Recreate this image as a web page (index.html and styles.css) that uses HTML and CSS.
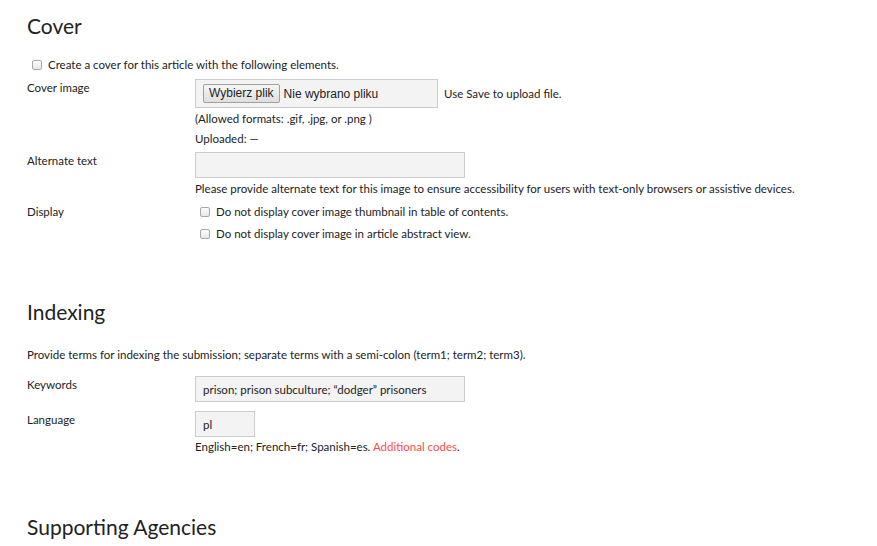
FILE: index.html
```html
<!DOCTYPE html>
<html lang="en">
<head>
  <meta charset="UTF-8">
  <title>Cover and indexing</title>
  <link rel="stylesheet" href="styles.css">
</head>
<body>
  <!-- Cover -->
  <section class="section section-cover">
    <h2>Cover</h2>
    <label class="check-line">
      <input type="checkbox"> Create a cover for this article with the following elements.
    </label>
    <div class="row">
      <div class="label">Cover image</div>
      <div class="field">
        <div class="file-line">
          <div class="file-box">
            <span class="file-btn">Wybierz plik</span>
            <span class="file-name">Nie wybrano pliku</span>
          </div>
          <span class="hint">Use Save to upload file.</span>
        </div>
        <p class="note note-formats">(Allowed formats: .gif, .jpg, or .png )</p>
        <p class="note note-uploaded">Uploaded: &mdash;</p>
      </div>
    </div>
    <div class="row row-alt">
      <div class="label">Alternate text</div>
      <div class="field">
        <input type="text" class="text-input wide">
        <p class="note">Please provide alternate text for this image to ensure accessibility for users with text-only browsers or assistive devices.</p>
      </div>
    </div>
    <div class="row row-display">
      <div class="label">Display</div>
      <div class="field">
        <label class="check-line"><input type="checkbox"> Do not display cover image thumbnail in table of contents.</label>
        <label class="check-line"><input type="checkbox"> Do not display cover image in article abstract view.</label>
      </div>
    </div>
  </section>

  <!-- Indexing -->
  <section class="section section-indexing">
    <h2>Indexing</h2>
    <p class="intro">Provide terms for indexing the submission; separate terms with a semi-colon (term1; term2; term3).</p>
    <div class="row row-keywords">
      <div class="label">Keywords</div>
      <div class="field">
        <input type="text" class="text-input wide" value="prison; prison subculture; &ldquo;dodger&rdquo; prisoners">
      </div>
    </div>
    <div class="row row-lang">
      <div class="label">Language</div>
      <div class="field">
        <input type="text" class="text-input short" value="pl">
        <p class="note note-codes">English=en; French=fr; Spanish=es. <a href="#">Additional codes</a>.</p>
      </div>
    </div>
  </section>

  <section class="section section-agencies">
    <h2>Supporting Agencies</h2>
  </section>
</body>
</html>
```

FILE: styles.css
```css
* { margin: 0; padding: 0; box-sizing: border-box; }
body {
  font-family: Lato, 'Open Sans', sans-serif;
  font-size: 11.5px;
  color: #222;
  background: #fff;
  padding: 0 27px;
}
h2 {
  font-weight: 400;
  font-size: 21px;
  color: #222;
  line-height: 26px;
}
.section-cover { padding-top: 13px; }
.section-cover h2 { margin-bottom: 18px; }
.section-indexing { padding-top: 51px; }
.section-indexing h2 { margin-bottom: 22px; }
.section-agencies { padding-top: 59px; }

.check-line {
  display: flex;
  align-items: center;
  gap: 6px;
  line-height: 16px;
  padding-left: 5px;
}
.check-line input {
  appearance: none;
  width: 10px;
  height: 10px;
  border: 1px solid #a9a9a9;
  border-radius: 2px;
  background: linear-gradient(#fdfdfd, #e6e6e6);
  margin: 0;
}

.row {
  display: flex;
}
.label {
  width: 168px;
  flex: none;
  line-height: 16px;
}
.field { flex: 1; }

.section-cover > .check-line { margin-bottom: 6px; }
.row:first-of-type .label { padding-top: 1px; }

.file-line {
  display: flex;
  align-items: center;
  gap: 6px;
}
.file-box {
  width: 243px;
  height: 29px;
  border: 1px solid #ccc;
  background: #f3f3f3;
  display: flex;
  align-items: center;
  padding-left: 7px;
  gap: 4px;
  font-family: Arial, 'Liberation Sans', sans-serif;
  font-size: 12px;
}
.file-btn {
  border: 1px solid #a0a0a0;
  border-radius: 2px;
  background: linear-gradient(#f6f6f6, #dedede);
  padding: 1px 5px;
  line-height: 15px;
}
.note {
  line-height: 16px;
  margin-top: 2px;
}
.note-formats { margin-top: 3px; }
.note-uploaded { margin-top: 4px; }

.row-alt { margin-top: 5px; }
.row-alt .label { padding-top: 1px; }
.text-input {
  height: 26px;
  border: 1px solid #ccc;
  background: #f3f3f3;
  font-family: inherit;
  font-size: 11.5px;
  color: #222;
  padding: 0 7px;
  display: block;
}
.wide { width: 270px; }
.short { width: 60px; }
.row-alt .note { margin-top: 3px; }

.row-display { margin-top: 7px; }
.row-display .check-line { padding-left: 5px; margin-bottom: 6px; }

.intro { line-height: 16px; margin-bottom: 13px; }
.row-keywords .label { padding-top: 1px; }
.row-lang { margin-top: 9px; }
.row-lang .label { padding-top: 1px; }
.note-codes { margin-top: 2px; }
a { color: #ff4a4a; text-decoration: none; }
```
